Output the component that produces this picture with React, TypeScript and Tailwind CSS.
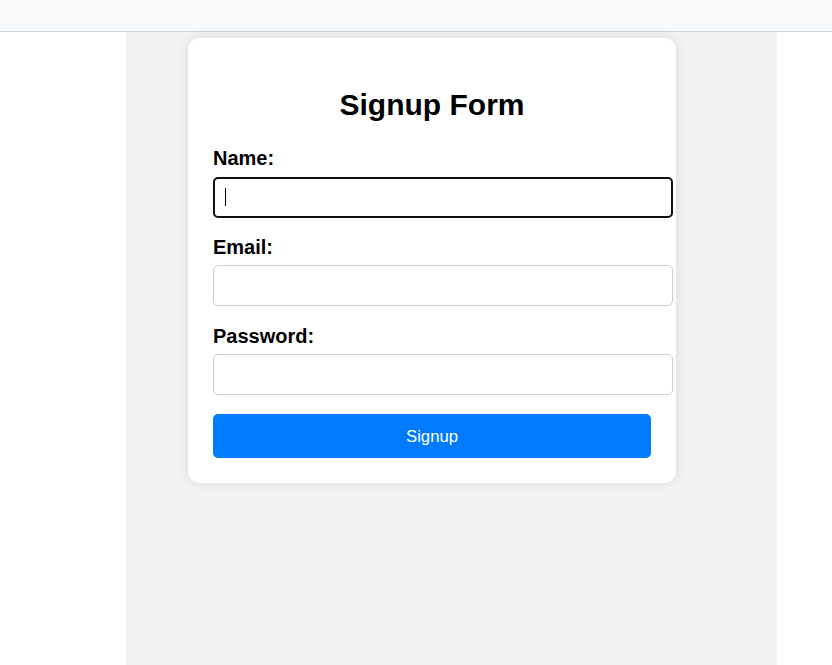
export default function App() {
  return (
    <div className="min-h-[665px] bg-white font-['Liberation_Sans',Arial,sans-serif] text-black">
      <div className="h-[32px] bg-[#f7f8fa] border-b border-[#cfd6de]" />
      <div className="ml-[126px] w-[651px] min-h-[633px] bg-[#f2f2f2] pt-[6px]">
        <div className="ml-[62px] w-[488px] bg-white rounded-[12px] shadow-[0_0_12px_rgba(0,0,0,0.1)] p-[25px]">
          <h2 className="mt-[25px] mb-[25px] text-center text-[30px] leading-[34px] font-bold">Signup Form</h2>
          <form className="flex flex-col" onSubmit={(e) => e.preventDefault()}>
            <label className="block text-[20px] leading-[23px] font-bold mb-[7px]">Name:</label>
            <div className="relative mb-[18px]">
              <input
                type="text"
                className="block w-[460px] h-[41px] px-[10px] rounded-[5px] border-2 border-[#111] outline-none bg-white"
              />
              <span className="absolute left-[12px] top-[11px] w-px h-[18px] bg-black" />
            </div>
            <label className="block text-[20px] leading-[23px] font-bold mb-[6px]">Email:</label>
            <input
              type="email"
              className="block w-[460px] h-[41px] px-[10px] rounded-[5px] border border-[#cccccc] outline-none bg-white mb-[19px]"
            />
            <label className="block text-[20px] leading-[23px] font-bold mb-[6px]">Password:</label>
            <input
              type="password"
              className="block w-[460px] h-[41px] px-[10px] rounded-[5px] border border-[#cccccc] outline-none bg-white mb-[19px]"
            />
            <button
              type="submit"
              className="w-[438px] h-[44px] rounded-[5px] bg-[#007bff] text-white text-[16.67px]"
            >
              Signup
            </button>
          </form>
        </div>
      </div>
    </div>
  );
}
